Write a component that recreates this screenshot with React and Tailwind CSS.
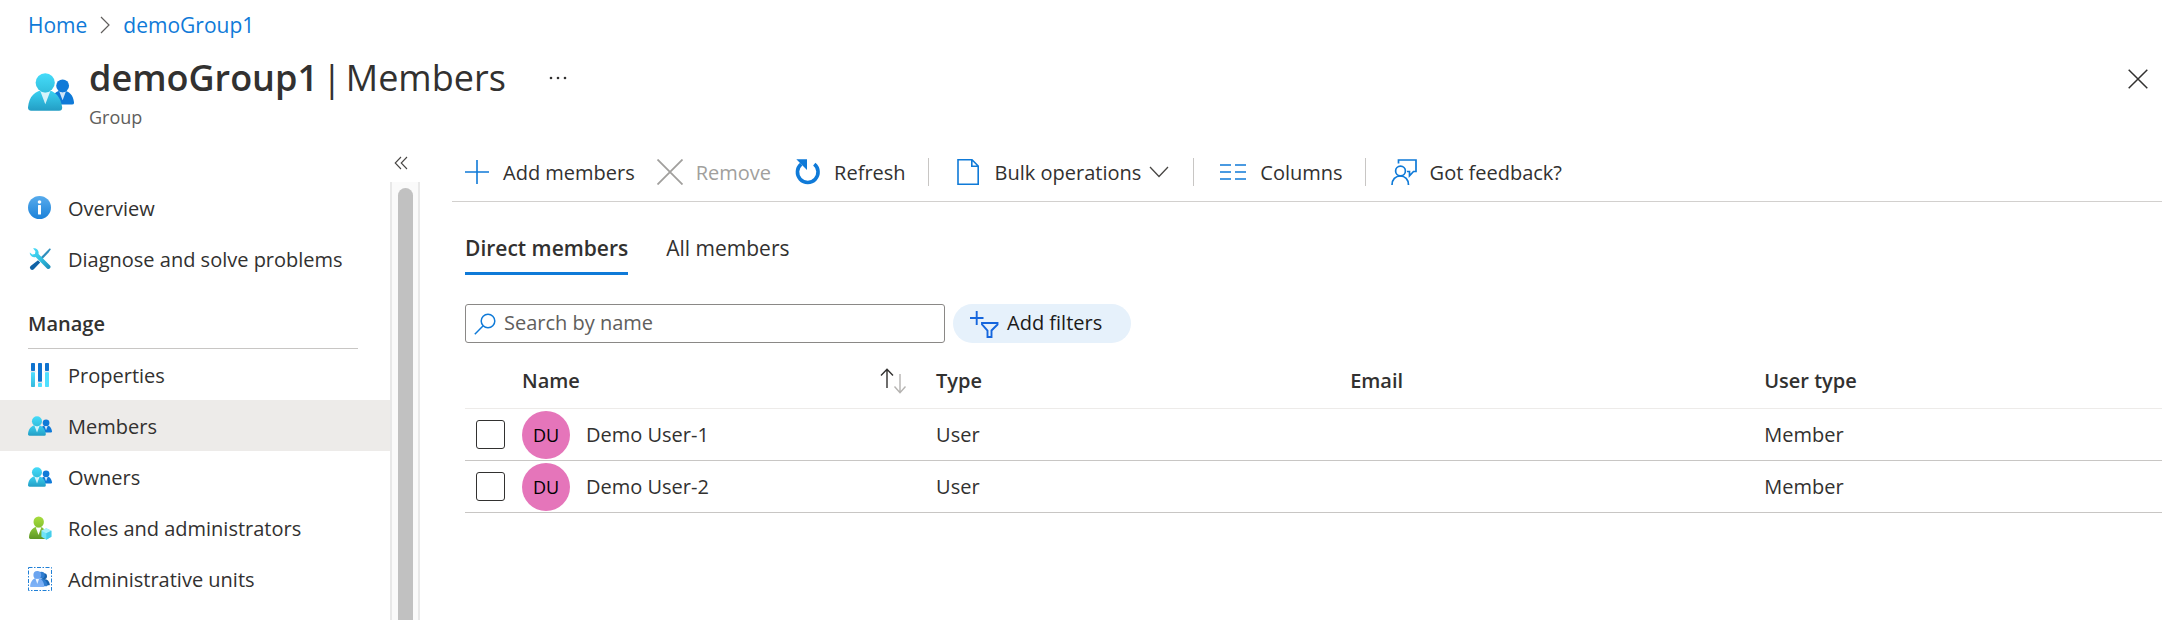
import React from 'react';

function GroupIcon({ className, id }) {
  return (
    <svg viewBox="0 0 18 18" className={className} aria-hidden="true">
      <defs>
        <linearGradient id={id + 'a'} x1="0" y1="0" x2="0" y2="1">
          <stop offset="0.1" stopColor="#38cdee" />
          <stop offset="1" stopColor="#239dc4" />
        </linearGradient>
        <linearGradient id={id + 'b'} x1="0" y1="0" x2="0" y2="1">
          <stop offset="0" stopColor="#45dcfa" />
          <stop offset="1" stopColor="#32bedd" />
        </linearGradient>
      </defs>
      <path d="M17.22,13.92a.79.79,0,0,0,.8-.79A.28.28,0,0,0,18,13c-.31-2.5-1.74-4.54-4.46-4.54S9.35,10.22,9.06,13a.81.81,0,0,0,.72.88h7.44Z" fill="#0f7ad8" />
      <path d="M13.55,9.09a2.44,2.44,0,0,1-1.36-.4l1.35,3.52,1.33-3.49A2.54,2.54,0,0,1,13.55,9.09Z" fill="#fff" opacity="0.8" />
      <circle cx="13.55" cy="6.58" r="2.51" fill="#0f7ad8" />
      <path d="M12.19,16.36a1.19,1.19,0,0,0,1.19-1.19.66.66,0,0,0,0-.14c-.47-3.74-2.6-6.78-6.66-6.78S.44,10.83,0,15a1.2,1.2,0,0,0,1.07,1.31h11.1Z" fill={`url(#${id}a)`} />
      <path d="M6.77,9.14a3.72,3.72,0,0,1-2-.6l2,5.25,2-5.21A3.81,3.81,0,0,1,6.77,9.14Z" fill="#fff" opacity="0.8" />
      <circle cx="6.74" cy="5.39" r="3.76" fill={`url(#${id}b)`} />
    </svg>
  );
}

function InfoIcon() {
  return (
    <svg viewBox="0 0 24 24" className="size-6" aria-hidden="true">
      <defs>
        <linearGradient id="info" x1="0" y1="0" x2="0" y2="1">
          <stop offset="0" stopColor="#57abec" />
          <stop offset="1" stopColor="#1c82d9" />
        </linearGradient>
      </defs>
      <circle cx="11.5" cy="11.5" r="11.5" fill="url(#info)" />
      <circle cx="11.5" cy="6" r="1.8" fill="#fff" />
      <rect x="10" y="9" width="3" height="9.5" rx="0.5" fill="#fff" />
    </svg>
  );
}

function ToolsIcon() {
  return (
    <svg viewBox="0 0 24 24" className="size-6" aria-hidden="true">
      <defs>
        <linearGradient id="wr" x1="0" y1="0" x2="1" y2="1">
          <stop offset="0" stopColor="#4fe0fb" />
          <stop offset="0.55" stopColor="#2fbfe0" />
          <stop offset="1" stopColor="#1b87b5" />
        </linearGradient>
      </defs>
      <path d="M21.800 1.200 22.900 2.300 20.600 5.600 14.200 12.200 12.600 10.600 19 4Z" fill="#2f8fbd" />
      <path d="M10 13.200l2.200 2.200-6.400 6.800a2.200 2.200 0 0 1-3.200-3.200Z" fill="#0f62a6" />
      <path d="M5 1.300c3.400-.7 6.300 2.200 5.500 5.700L22 18.400c1.900 2-1 4.900-3 3L7.600 10c-3 .9-6-1.300-5.800-4.600L4.300 7.600 7 7.100 7.400 4.300Z" fill="url(#wr)" />
    </svg>
  );
}

function PropertiesIcon() {
  return (
    <svg viewBox="0 0 24 24" className="size-6" aria-hidden="true">
      <defs>
        <linearGradient id="pr" x1="0" y1="0" x2="0" y2="1">
          <stop offset="0" stopColor="#50e0ff" />
          <stop offset="1" stopColor="#35b8dc" />
        </linearGradient>
      </defs>
      <rect x="3" y="0" width="4" height="8" rx="0.7" fill="#0f73cf" />
      <rect x="3" y="9" width="4" height="15" rx="0.7" fill="url(#pr)" />
      <rect x="2.500" y="8" width="5" height="1.200" fill="#dfe6ea" />
      <rect x="10" y="0" width="4" height="19" rx="0.7" fill="#0f73cf" />
      <rect x="10" y="20" width="4" height="4" rx="0.7" fill="#50e0ff" />
      <rect x="9.500" y="18.700" width="5" height="1.300" fill="#dfe6ea" />
      <rect x="17" y="0" width="4" height="8" rx="0.7" fill="#0f73cf" />
      <rect x="17" y="9" width="4" height="15" rx="0.7" fill="#50e0ff" />
      <rect x="16.500" y="8" width="5" height="1.200" fill="#dfe6ea" />
    </svg>
  );
}

function RolesIcon() {
  return (
    <svg viewBox="0 0 24 24" className="size-6" aria-hidden="true">
      <defs>
        <linearGradient id="ro" x1="0" y1="0" x2="0" y2="1">
          <stop offset="0" stopColor="#8cc83a" />
          <stop offset="1" stopColor="#5e9624" />
        </linearGradient>
        <linearGradient id="rh" x1="0" y1="0" x2="0" y2="1">
          <stop offset="0" stopColor="#a8dd3e" />
          <stop offset="1" stopColor="#86c230" />
        </linearGradient>
      </defs>
      <path d="M17.300 23a1.600 1.600 0 0 0 1.600-1.800C18.200 15.400 15.700 10.600 10.500 10.600S1.500 15 1 21.200A1.600 1.600 0 0 0 2.500 23Z" fill="url(#ro)" />
      <path d="M7.700 11.300 10.500 19l2.900-7.700Z" fill="#fff" />
      <ellipse cx="10.700" cy="6" rx="5.200" ry="5.600" fill="url(#rh)" />
      <path d="M18.300 12.300 23.400 14.700V20.700L18.300 23.700 13.400 20.700V14.700Z" fill="#6fe3f8" />
      <path d="M18.300 12.300 23.400 14.700 18.300 17.300 13.400 14.700Z" fill="#a9effb" />
      <path d="M18.300 17.300 23.400 14.700V20.700L18.300 23.700Z" fill="#45cdea" />
    </svg>
  );
}

function UnitsIcon() {
  return (
    <svg viewBox="0 0 24 24" className="size-6" aria-hidden="true">
      <defs>
        <linearGradient id="un" x1="0" y1="0" x2="0" y2="1">
          <stop offset="0" stopColor="#6fa8f2" />
          <stop offset="1" stopColor="#82b4f7" />
        </linearGradient>
      </defs>
      <rect x="0.5" y="0.5" width="23" height="23" fill="none" stroke="#1f7fd6" strokeDasharray="4 1.500 1.500 1.500" />
      <circle cx="16" cy="9.300" r="3" fill="#1862ad" />
      <path d="M11 18.300h10c.6 0 .9-.5.800-1-.5-3.200-2.300-5.400-5.600-5.400s-5 2.200-5.200 6.400Z" fill="#1862ad" />
      <circle cx="13.300" cy="8.200" r="3.400" fill="#2f7dd0" />
      <path d="M8 19.200h10.700c.6 0 1-.5.900-1.100-.6-3.700-2.600-6.200-6.200-6.200S8 14.500 8 19.200Z" fill="#2f7dd0" />
      <path d="M3 20h12.300c.6 0 1.100-.5 1-1.100C15.700 14.500 13.500 11 9.300 11s-6.600 3.300-7.200 7.900c-.1.600.3 1.100.9 1.100Z" fill="url(#un)" />
      <path d="M7.400 11.600 9.300 17l1.900-5.400Z" fill="#eef5ff" />
      <circle cx="9.300" cy="7.900" r="3.900" fill="#6ba4ef" />
    </svg>
  );
}

function NavItem({ icon, label, active }) {
  return (
    <li>
      <a
        href="#"
        aria-current={active ? 'page' : undefined}
        className={
          active
            ? 'flex h-[51px] items-center gap-4 bg-[#edebe9] pl-7'
            : 'flex h-[51px] items-center gap-4 pl-7'
        }
      >
        <span className="shrink-0">{icon}</span>
        <span className="pt-0.5 whitespace-nowrap">{label}</span>
      </a>
    </li>
  );
}

function Separator() {
  return <div className="h-7 w-px bg-[#c8c6c4]" />;
}

const members = [
  { name: 'Demo User-1', initials: 'DU', type: 'User', email: '', userType: 'Member' },
  { name: 'Demo User-2', initials: 'DU', type: 'User', email: '', userType: 'Member' },
];

function Sidebar() {
  return (
    <aside className="flex w-[420px] shrink-0 flex-col">
      <div className="flex h-[42px] justify-end pt-[9px] pr-[5px]">
        <button type="button" aria-label="Collapse menu" className="flex size-7 items-center justify-center">
          <svg viewBox="0 0 14 14" className="size-[14px]" fill="none" stroke="#484644" strokeWidth="1.100" aria-hidden="true">
            <path d="M7 1 1.200 7 7 13M13 1 7.200 7 13 13" />
          </svg>
        </button>
      </div>
      <div className="flex min-h-0 flex-1">
        <nav className="min-w-0 flex-1 overflow-hidden">
          <ul>
            <NavItem icon={<InfoIcon />} label="Overview" />
            <NavItem icon={<ToolsIcon />} label="Diagnose and solve problems" />
          </ul>
          <h2 className="mr-8 ml-7 flex h-[65px] items-end border-b border-[#c8c6c4] pb-[10px] font-semibold">Manage</h2>
          <ul>
            <NavItem icon={<PropertiesIcon />} label="Properties" />
            <NavItem icon={<GroupIcon id="m" className="size-6" />} label="Members" active />
            <NavItem icon={<GroupIcon id="o" className="size-6" />} label="Owners" />
            <NavItem icon={<RolesIcon />} label="Roles and administrators" />
            <NavItem icon={<UnitsIcon />} label="Administrative units" />
          </ul>
        </nav>
        <div className="flex w-[30px] border-x-2 border-[#e8e8e8] bg-[#fafafa] px-[5px] pt-[6px]">
          <div className="ml-px w-4 rounded-t-full bg-[#c1c1c1]" />
        </div>
      </div>
    </aside>
  );
}

function Toolbar() {
  return (
    <div role="toolbar" className="ml-8 flex h-[60px] items-center border-b border-[#d2d0ce] pl-3 whitespace-nowrap">
      <button type="button" className="flex items-center gap-[13px]">
        <svg viewBox="0 0 26 26" className="size-[26px]" fill="none" stroke="#0f7ad8" strokeWidth="1.600" aria-hidden="true">
          <path d="M1 13H25M13 1V25" />
        </svg>
        <span className="pt-0.5">Add members</span>
      </button>
      <button type="button" disabled className="ml-[22px] flex items-center gap-[13px] text-[#a19f9d]">
        <svg viewBox="0 0 26 26" className="size-[26px]" fill="none" stroke="#a19f9d" strokeWidth="1.800" aria-hidden="true">
          <path d="M.5.5 25.500 25.500M25.500.5.500 25.500" />
        </svg>
        <span className="pt-0.5">Remove</span>
      </button>
      <button type="button" className="ml-6 flex items-center gap-[13px]">
        <svg viewBox="0 0 26 26" className="size-[26px]" aria-hidden="true">
          <path d="M19.300 5.200A10.300 10.300 0 1 1 6.200 5.200" fill="none" stroke="#0f7ad8" strokeWidth="3.600" />
          <path d="M1.300.3H12V11Z" fill="#0f7ad8" />
        </svg>
        <span className="pt-0.5">Refresh</span>
      </button>
      <div className="ml-[22px]"><Separator /></div>
      <button type="button" className="ml-7 flex items-center gap-4">
        <svg viewBox="0 0 22 26" className="h-[26px] w-[22px]" fill="none" stroke="#0f7ad8" strokeWidth="1.600" aria-hidden="true">
          <path d="M1 .8H15L21.200 7V25.200H1ZM14.800 .8V7.200H21.200" />
        </svg>
        <span className="pt-0.5">Bulk operations</span>
        <svg viewBox="0 0 20 12" className="-ml-2 h-3 w-5" fill="none" stroke="#484644" strokeWidth="1.300" aria-hidden="true">
          <path d="M1 1 10 10.500 19 1" />
        </svg>
      </button>
      <div className="ml-6"><Separator /></div>
      <button type="button" className="ml-[25px] flex items-center gap-[13px]">
        <svg viewBox="0 0 28 18" className="h-[18px] w-7" fill="none" stroke="#0f7ad8" strokeWidth="1.600" aria-hidden="true">
          <path d="M1 2H12M16 2H27M1 9H12M16 9H27M1 16H12M16 16H27" />
        </svg>
        <span className="pt-0.5">Columns</span>
      </button>
      <div className="ml-[22px]"><Separator /></div>
      <button type="button" className="ml-[25px] flex items-center gap-[13px]">
        <svg viewBox="0 0 26 26" className="size-[26px]" fill="none" stroke="#0f7ad8" strokeWidth="1.700" aria-hidden="true">
          <path d="M7.500 4.500V1H25V12.500H22.500L18.500 16.800V12.500H16" />
          <circle cx="9.500" cy="12" r="4.900" />
          <path d="M1 26C1 20.500 4.500 17 9.300 17S17.500 20.500 17.500 26" />
        </svg>
        <span className="pt-0.5">Got feedback?</span>
      </button>
    </div>
  );
}

function MembersTable() {
  return (
    <table className="mt-[11px] w-full table-fixed border-collapse text-left">
      <colgroup>
        <col className="w-[57px]" />
        <col className="w-[24.4%]" />
        <col className="w-[24.4%]" />
        <col className="w-[24.4%]" />
        <col />
      </colgroup>
      <thead>
        <tr className="h-[54px] border-b border-[#edebe9]">
          <td />
          <th scope="col" className="p-0 font-semibold">
            <button type="button" className="flex w-full items-center justify-between pr-[30px]">
              Name
              <svg viewBox="0 0 26 26" className="size-[26px]" fill="none" strokeWidth="1.400" aria-hidden="true">
                <path d="M7 20V1.500M1 7.500 7 1.300 13 7.500" stroke="#323130" />
                <path d="M20 6V24.500M14.500 18.500 20 24.700 25.500 18.500" stroke="#b5b3b1" />
              </svg>
            </button>
          </th>
          <th scope="col" className="p-0 font-semibold">Type</th>
          <th scope="col" className="p-0 font-semibold">Email</th>
          <th scope="col" className="p-0 font-semibold">User type</th>
        </tr>
      </thead>
      <tbody>
        {members.map((m) => (
          <tr key={m.name} className="h-[52px] border-b border-[#c8c6c4]">
            <td className="p-0 pl-[11px]">
              <input
                type="checkbox"
                aria-label={'Select ' + m.name}
                className="block size-[29px] appearance-none rounded-[3px] border border-[#323130] bg-white"
              />
            </td>
            <td className="p-0 pt-0.5">
              <div className="flex items-center gap-4">
                <span className="flex size-12 shrink-0 items-center justify-center rounded-full bg-[#e575ba] text-[18px] font-medium text-black">
                  {m.initials}
                </span>
                <span>{m.name}</span>
              </div>
            </td>
            <td className="p-0 pt-0.5">{m.type}</td>
            <td className="p-0 pt-0.5">{m.email}</td>
            <td className="p-0 pt-0.5">{m.userType}</td>
          </tr>
        ))}
      </tbody>
    </table>
  );
}

export default function App() {
  return (
    <div className="flex h-screen flex-col overflow-hidden bg-white font-['Open_Sans','Noto_Sans',sans-serif] text-[20px] leading-7 text-[#323130]">
      <nav aria-label="Breadcrumb" className="flex h-[50px] items-center gap-[13px] pl-7 text-[21px] text-[#0f7ad8]">
        <a href="#">Home</a>
        <svg viewBox="0 0 10 18" className="h-[18px] w-[10px]" fill="none" stroke="#605e5c" strokeWidth="1.200" aria-hidden="true">
          <path d="M1 1 9 9 1 17" />
        </svg>
        <a href="#">demoGroup1</a>
      </nav>
      <header className="flex h-[90px] pl-7">
        <GroupIcon id="h" className="mt-[19px] size-[46px]" />
        <div className="ml-[15px]">
          <div className="flex items-center">
            <h1 className="flex gap-1 text-[36px] leading-[56px]">
              <span className="font-semibold">demoGroup1</span>
              <span>|</span>
              <span>Members</span>
            </h1>
            <button type="button" aria-label="More options" className="ml-9 flex size-8 items-center justify-center">
              <svg viewBox="0 0 20 4" className="h-1 w-5" fill="#323130" aria-hidden="true">
                <circle cx="3" cy="2" r="1.300" />
                <circle cx="10" cy="2" r="1.300" />
                <circle cx="17" cy="2" r="1.300" />
              </svg>
            </button>
          </div>
          <p className="text-[18px] leading-[22px] text-[#605e5c]">Group</p>
        </div>
        <button type="button" aria-label="Close" className="mt-[13px] mr-2 ml-auto flex size-8 items-center justify-center">
          <svg viewBox="0 0 20 20" className="size-5" fill="none" stroke="#323130" strokeWidth="1.500" aria-hidden="true">
            <path d="M.7.7 19.300 19.300M19.300.7.700 19.300" />
          </svg>
        </button>
      </header>
      <div className="flex min-h-0 flex-1">
        <Sidebar />
        <main className="flex min-w-0 flex-1 flex-col pt-[2px]">
          <Toolbar />
          <div className="pl-[45px]">
            <div role="tablist" className="flex gap-[38px] pt-8 text-[21px]">
              <button type="button" role="tab" aria-selected="true" className="flex h-[41px] items-start border-b-3 border-[#0f7ad8] font-semibold">
                Direct members
              </button>
              <button type="button" role="tab" aria-selected="false" className="flex h-[41px] items-start">
                All members
              </button>
            </div>
            <div className="mt-[29px] flex gap-2">
              <label className="flex h-[39px] w-[480px] items-center gap-2 rounded-[3px] border border-[#8a8886] pl-2">
                <svg viewBox="0 0 22 22" className="size-[22px] shrink-0" fill="none" stroke="#0f7ad8" strokeWidth="1.500" aria-hidden="true">
                  <circle cx="14" cy="8" r="6.800" />
                  <path d="M9.200 12.800.8 21.200" />
                </svg>
                <input
                  type="text"
                  aria-label="Search by name"
                  placeholder="Search by name"
                  className="min-w-0 flex-1 bg-transparent pb-0.5 outline-none placeholder:text-[#605e5c]"
                />
              </label>
              <button type="button" className="flex h-[39px] items-center gap-2 rounded-full bg-[#e6f1fb] pr-[29px] pl-4 text-[#1b1a19]">
                <svg viewBox="0 0 30 28" className="h-7 w-[30px]" fill="none" stroke="#1566dd" strokeWidth="1.900" aria-hidden="true">
                  <path d="M1 8H14.500M7.700 1V15" />
                  <path d="M13 13H28.500V14.500L22.500 20.500V27H18.500V20.500L13 14.500Z" />
                </svg>
                <span className="pb-0.5">Add filters</span>
              </button>
            </div>
            <MembersTable />
          </div>
        </main>
      </div>
    </div>
  );
}
